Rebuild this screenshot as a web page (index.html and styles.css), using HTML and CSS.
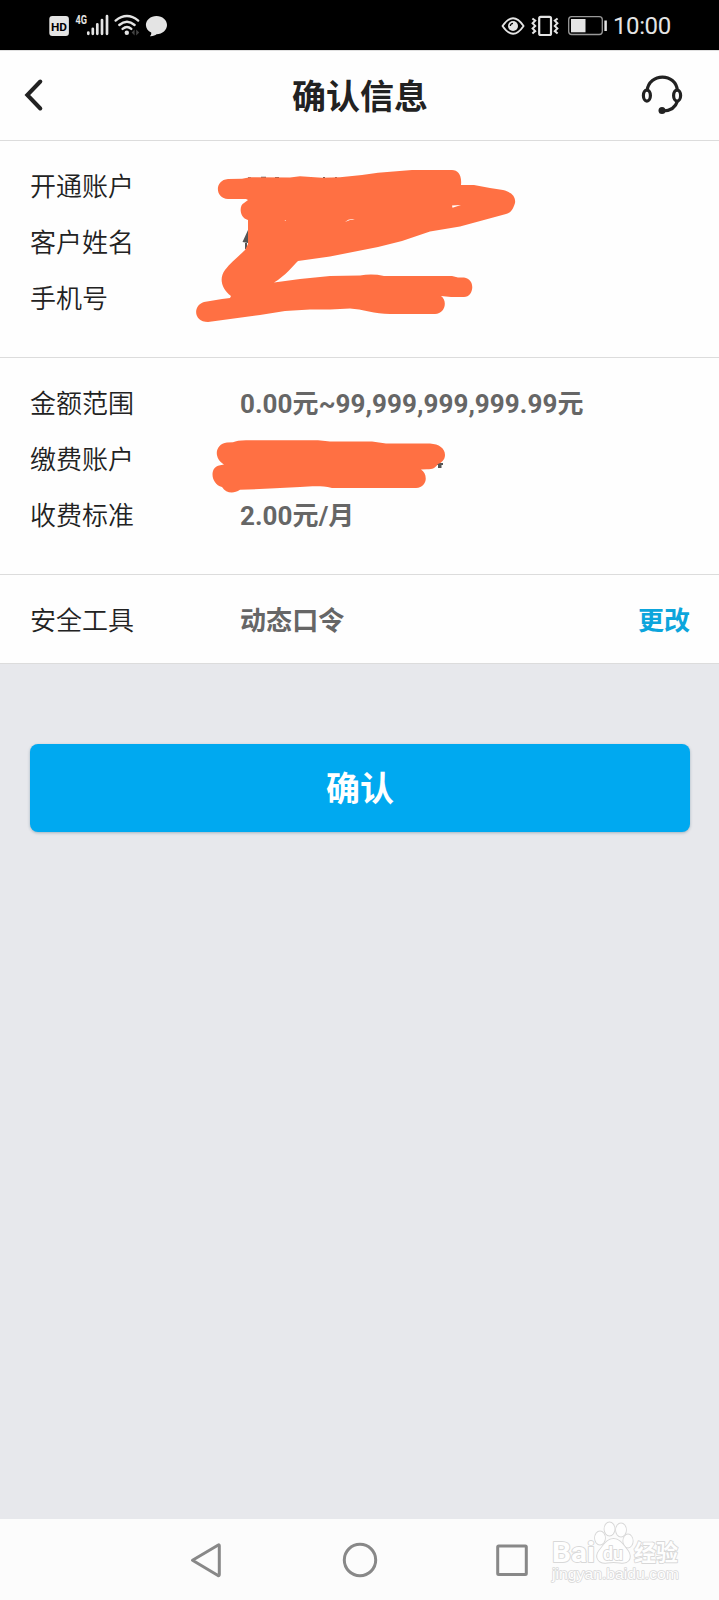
FILE: index.html
```html
<!DOCTYPE html>
<html lang="zh-CN">
<head>
<meta charset="utf-8">
<title>确认信息</title>
<link rel="stylesheet" href="styles.css">
</head>
<body>
<div class="screen">
  <div class="status">
    <svg class="status-left" width="130" height="50" viewBox="45 0 130 50">
      <rect x="49.3" y="16" width="19.6" height="20" rx="3" fill="#e4e4e4"/>
      <text class="hd" x="59" y="30.6" text-anchor="middle" textLength="16" lengthAdjust="spacingAndGlyphs">HD</text>
      <text class="net" x="75.6" y="24.2" textLength="11.5" lengthAdjust="spacingAndGlyphs">4G</text>
      <path d="M88.3 33.8V32.6M92.8 33.8V28.8M97.3 33.8V24.3M102 33.8V20M107 33.8V16.2" stroke="#e4e4e4" stroke-width="2.7" stroke-linecap="round"/>
      <g fill="none" stroke="#e4e4e4" stroke-width="2.4" stroke-linecap="round">
        <path d="M115.6 20.6Q127 11.6 138.2 20.6"/><path d="M119.3 25Q127 18.4 134.6 25"/><path d="M122.6 28.9Q127 25.2 131.3 28.9"/>
      </g>
      <circle cx="126.8" cy="32.8" r="2.2" fill="#e4e4e4"/>
      <path d="M134.6 29.5v6l-3-3zM136.2 29.5v6l3-3z" fill="#444"/>
      <path d="M156.5 16c6 0 10.500 4 10.500 9s-4.500 9.200-10.500 9.200c-1 1-3.500 2.200-6.500 2 1-1 1.500-2 1.200-3.600-3.200-1.600-5.300-4.300-5.300-7.600 0-5 4.600-9 10.600-9z" fill="#e4e4e4"/>
    </svg>
    <div class="status-right">
      <svg width="108" height="50" viewBox="500 0 108 50" fill="none" stroke="#e4e4e4">
        <path d="M502.500 26Q513 10.500 523.600 26Q513 41.500 502.500 26Z" stroke-width="1.800" stroke-linejoin="round"/>
        <circle cx="513" cy="26" r="5" fill="#e4e4e4" stroke="none"/><path d="M510.300 26a3 3 0 0 1 2.700-2.600" stroke="#000" stroke-width="1.300"/>
        <rect x="539.200" y="16.800" width="11.800" height="18.200" rx="1.500" stroke-width="2.200"/>
        <path d="M532.400 18.500l2.800 2.200-2.600 2.600 2.600 2.600-2.600 2.600 2.600 2.600-2.800 2.400M557.600 18.500l-2.800 2.200 2.600 2.600-2.600 2.600 2.600 2.600-2.600 2.600 2.800 2.400" stroke-width="2"/>
        <rect x="568.700" y="16.700" width="33.600" height="17.800" rx="3" stroke="#999" stroke-width="1.300"/>
        <path d="M571 19h14.500v13.300H571z" fill="#e4e4e4" stroke="none"/>
        <path d="M605.600 20.500v10.500" stroke-width="2.500"/>
      </svg>
      <span class="clock">10:00</span>
    </div>
  </div>

  <header class="header">
    <svg class="back" width="20" height="34" viewBox="24 78 20 34"><path d="M40.300 81.500L27.300 95 40.300 108.500" fill="none" stroke="#222" stroke-width="4" stroke-linecap="round"/></svg>
    <h1 class="title">确认信息</h1>
    <svg class="service" width="44" height="42" viewBox="640 74 44 42" fill="none" stroke="#222" stroke-width="3.200">
      <path d="M647 91C649 72.500 676 72.500 677.500 91"/>
      <ellipse cx="646.900" cy="95.600" rx="3.500" ry="5.500"/><ellipse cx="677.100" cy="95.600" rx="3.500" ry="5.500"/>
      <path d="M677.500 101C675.500 107.500 671 110.800 663 111"/>
      <circle cx="662" cy="110.600" r="3.500" fill="#222" stroke="none"/>
    </svg>
  </header>

  <section class="card">
    <div class="row"><span class="label">开通账户</span></div>
    <div class="row"><span class="label">客户姓名</span></div>
    <div class="row"><span class="label">手机号</span></div>
    <svg class="scribble" width="719" height="216" viewBox="0 141 719 216">
      <path d="M248 230L242.500 242 248 243V230zM245 243v6h2v-6z" fill="#555"/>
      <path d="M248 178h3M261 177.500h5M275 177.800h4M323 177.800h2M335 177.800h2" stroke="#555" stroke-width="1.500" fill="none"/>
      <path fill="#ff7043" d="M228 179L242 178.800 250 177.300 290 177.600 300 176.300 322 177.800 340 177.300 362 175 378 172.800 412 170H452C458 170 462 175 461 185H474L490 188 503 190C512 192 516 197 515 203C513 210 510 213 506 214L460 226.500 430 231.500 402 241 378 247 330 256.500 298 261C293 266 285 276 274 282.500L300 279 330 276 360 275.500Q372 273.500 384 275.900H452L458 277.500H464C476 279 474 297 464 297H451L441 296C448 301 445 314 435 314H390C375 314 362 309 350 308.500L330 309.500H310L285 311 260 315 208 322C194 322 192 306 204 302L222 299 230 298 231 296C221 288 219 278 225 270C231 262 239 256 245 250L248 244V220C239 218 239 205 244 203L248 200 246 199H228C215 199 214 180 228 179Z"/>
      <path fill="#fff" d="M452 205.500l9-.4-8.500 2.600zM345 222q4-4 10-2.700-5 0-10 2.700zM284.500 220.300h1.800l-1 .8z"/>
    </svg>
  </section>

  <section class="card">
    <div class="row"><span class="label">金额范围</span><span class="value">0.00元~99,999,999,999.99元</span></div>
    <div class="row"><span class="label">缴费账户</span></div>
    <div class="row"><span class="label">收费标准</span><span class="value">2.00元/月</span></div>
    <svg class="scribble" width="719" height="216" viewBox="0 358 719 216">
      <path d="M437 463h6v2h-1.500v3h-3.500v-3h-1z" fill="#555"/>
      <path fill="#ff7043" d="M227 442.500L233 442.300Q237 440.200 246 440.200H318L330 441.500H372L386 443.400H430C439 444 445 448 445 455C445 460 441 463 438 464C435 468 433 469.300 427 469.300L421 469.600C428 474 428 487 416 488H332C318 485 310 487 300 487L270 488.600 240 489.800C233 494.500 226 493 222 487C211 484 209 468 219 465.500L224 464.600C213 458 215 444 227 442.500Z"/>
    </svg>
  </section>

  <section class="card card-tool">
    <div class="row"><span class="label">安全工具</span><span class="value">动态口令</span><a class="change">更改</a></div>
  </section>

  <main class="body"><button class="confirm">确认</button></main>

  <nav class="nav">
    <svg width="719" height="81" viewBox="0 1519 719 81" fill="none" stroke="#888" stroke-width="3" stroke-linejoin="round">
      <path d="M192.500 1560.300L218.300 1545Q219.300 1544.500 219.300 1546V1574.500Q219.300 1576 218 1575.500Z"/>
      <circle cx="360" cy="1560" r="15.700"/>
      <rect x="497.700" y="1546" width="28.600" height="28.600" rx="1"/>
      <g class="mark">
        <text class="mark-word" x="552" y="1562" textLength="43" lengthAdjust="spacingAndGlyphs">Bai</text>
        <ellipse cx="600" cy="1538" rx="5" ry="6.500"/><ellipse cx="609.500" cy="1529" rx="5" ry="6.500"/><ellipse cx="621" cy="1530" rx="5" ry="6.500"/><ellipse cx="628" cy="1541" rx="4.700" ry="6.500"/>
        <path d="M613.500 1539C620 1539 623 1545 628 1551C633 1559 627 1564 620 1562.500Q613.500 1561.500 607 1562.500C600 1564 594 1558 599 1551C604 1545 607 1539 613.500 1539Z"/>
        <text class="mark-du" x="603" y="1559.500" textLength="20" lengthAdjust="spacingAndGlyphs">du</text>
        <text class="mark-cn" x="634" y="1561" textLength="44" lengthAdjust="spacingAndGlyphs">经验</text>
        <text class="mark-url" x="552" y="1578.500" textLength="127" lengthAdjust="spacingAndGlyphs">jingyan.baidu.com</text>
      </g>
    </svg>
  </nav>
</div>
</body>
</html>
```
FILE: styles.css
```css
* { box-sizing: border-box; }
body { margin: 0; background: #e7e8ec; font-family: Roboto, "Noto Sans CJK SC", sans-serif; }
.screen { width: 719px; height: 1600px; display: flex; flex-direction: column; overflow: hidden; }
svg { display: block; flex: none; }

.status { height: 50px; flex: none; background: #000; display: flex; justify-content: space-between; padding: 0 48px 0 45px; }
.status-right { display: flex; align-items: center; gap: 5px; }
.clock { color: #e4e4e4; font-size: 24px; letter-spacing: -.4px; line-height: 50px; width: 58px; padding-top: 2px; white-space: nowrap; }
.hd { font: 700 11.5px Roboto, sans-serif; fill: #000; }
.net { font: 700 12px Roboto, sans-serif; fill: #e4e4e4; }

.header { height: 91px; flex: none; background: #fefefe; border-top: 1px solid #e0e0e0; border-bottom: 1px solid #dcdcdc; display: grid; grid-template-columns: 1fr auto 1fr; align-items: center; padding: 0 35px 2px 24px; }
.title { margin: 0 0 0 12px; font-size: 34px; font-weight: 700; line-height: 50px; color: #222; padding-top: 4px; }
.service { justify-self: end; }

.card { position: relative; flex: none; background: #fefefe; border-bottom: 1px solid #dcdcdc; padding: 18px 29px 30px 30px; }
.card-tool { padding-bottom: 14px; }
.row { height: 56px; display: flex; align-items: center; font-size: 26px; line-height: 56px; white-space: nowrap; }
.label { width: 210px; color: #222; font-weight: 350; }
.value { color: #666; font-weight: 700; letter-spacing: .07px; }
.change { margin-left: auto; color: #0ca5dc; font-weight: 700; }
.scribble { position: absolute; left: 0; top: 0; }

.body { flex: 1; padding: 80px 29px 0 30px; background: #e7e8ec; }
.confirm { display: block; width: 100%; height: 88px; border: 0; border-radius: 8px; background: #00a9f0; color: #fff; font: 700 34px/86px Roboto, "Noto Sans CJK SC", sans-serif; padding: 2px 0 0; box-shadow: 0 1px 3px rgba(0, 60, 90, .3); }

.nav { height: 81px; flex: none; background: #fcfcfc; }
.mark { stroke: #d8d8d8; stroke-width: 1.8; fill: #fefefe; paint-order: stroke; }
.mark-word { font: 700 28px Roboto, sans-serif; }
.mark-du { font: 700 19px Roboto, sans-serif; }
.mark-cn { font: 700 23px "Noto Sans CJK SC", sans-serif; }
.mark-url { font: 400 15px "Liberation Sans", sans-serif; stroke-width: 1.5; }
```
